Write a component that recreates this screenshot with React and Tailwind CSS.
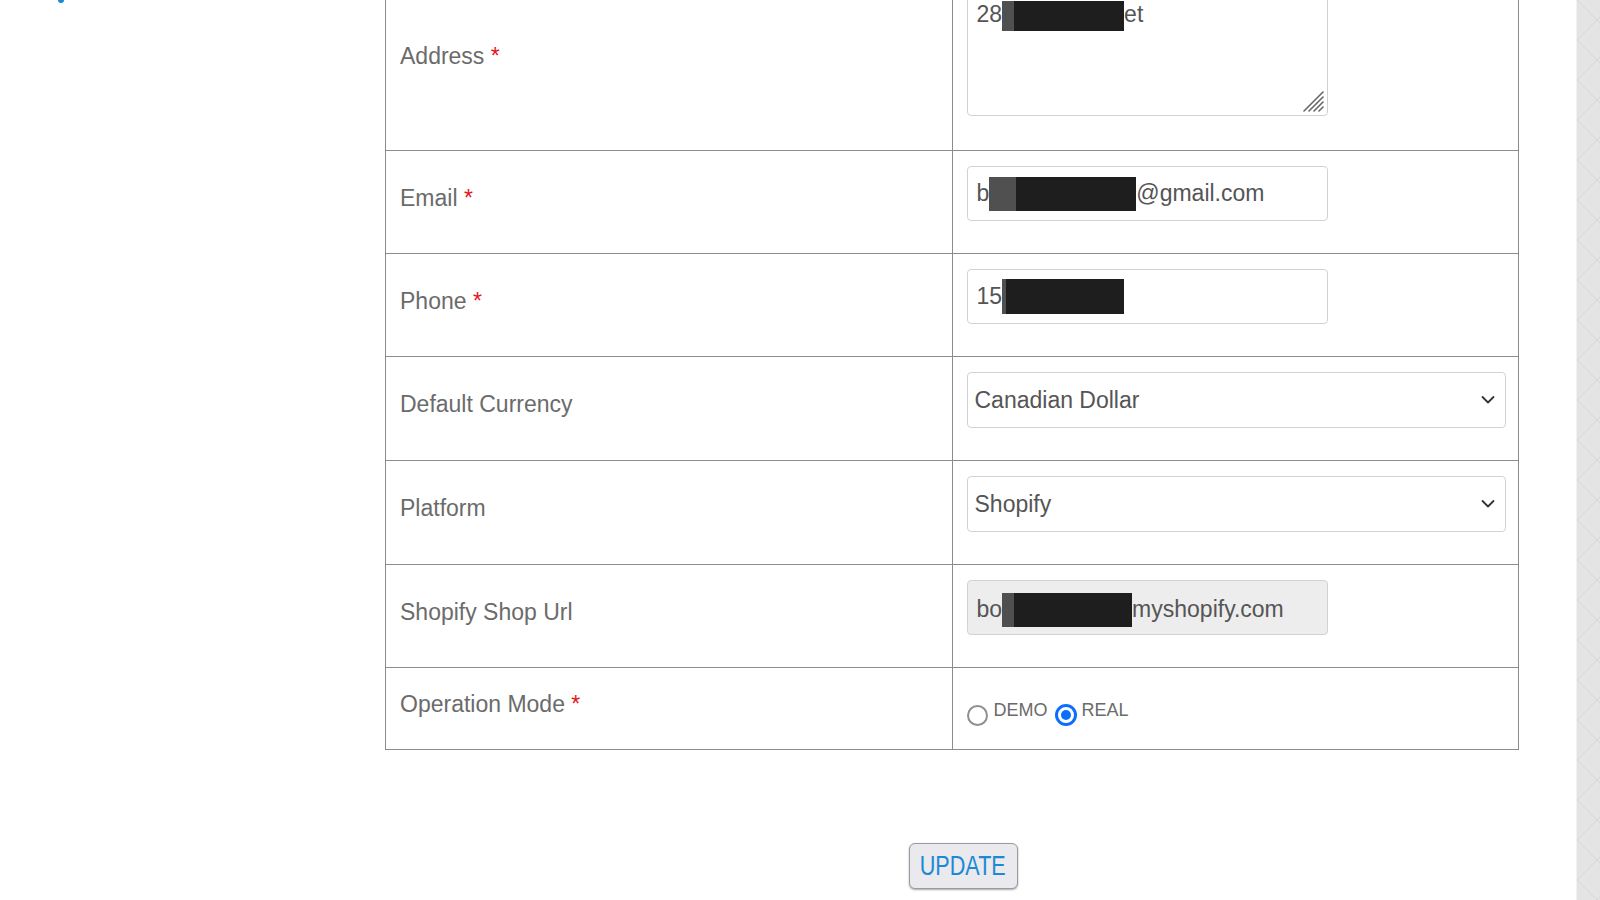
const Req = () => <span className="text-[#e8141b]"> *</span>

const Redact = ({ w, h = 34, lead = 0 }) => (
  <span className="inline-flex items-stretch align-middle" style={{ height: h }}>
    {lead > 0 && <span className="bg-[#3d3d3d]/90" style={{ width: lead }} />}
    <span className="bg-[#1e1e1e]" style={{ width: w }} />
  </span>
)

const Chevron = () => (
  <svg className="absolute right-[10px] top-1/2 -translate-y-1/2" width="14" height="9" viewBox="0 0 14 9">
    <polyline points="1.5,1.5 7,7 12.5,1.5" fill="none" stroke="#333" strokeWidth="1.8" strokeLinecap="round" strokeLinejoin="round" />
  </svg>
)

const ResizeHandle = () => (
  <svg className="absolute bottom-[2px] right-[2px]" width="24" height="24" viewBox="0 0 24 24">
    <g stroke="#666" strokeWidth="1.6" strokeLinecap="round">
      <line x1="22" y1="3" x2="3" y2="22" />
      <line x1="22" y1="8" x2="8" y2="22" />
      <line x1="22" y1="13" x2="13" y2="22" />
      <line x1="22" y1="18" x2="18" y2="22" />
    </g>
  </svg>
)

const Row = ({ label, required, children, labelClass = 'pb-[8px]', valueClass = 'pt-[15px] pb-[16px]' }) => (
  <tr>
    <td className={`border border-[#8c8c8c] px-[14px] align-middle text-[23px] text-[#6b6b6b] ${labelClass}`}>
      {label}
      {required && <Req />}
    </td>
    <td className={`border border-[#8c8c8c] px-[14px] align-top ${valueClass}`}>{children}</td>
  </tr>
)

const fieldBox = 'flex items-center w-[361px] h-[55px] rounded-[4px] border border-[#d2d2d2] px-[9px] text-[23px] text-[#555] mb-[16px] whitespace-nowrap'
const selectBox = 'relative flex items-center w-[539px] h-[56px] rounded-[4px] border border-[#d2d2d2] pl-[7px] text-[23px] text-[#555] mb-[16px] bg-white'

export default function App() {
  return (
    <div className="flex h-[900px] overflow-hidden bg-white font-['Liberation_Sans',Arial,sans-serif]">
      <div className="flex flex-1">
        <aside className="w-[385px] shrink-0">
          <div className="ml-[58px] h-[3px] w-[6px] rounded-b-sm bg-[#1a8ad4]" />
        </aside>

        <main className="w-[1134px] shrink-0 -mt-[36px]">
          <table className="w-[1134px] table-fixed border-collapse">
            <colgroup>
              <col className="w-1/2" />
              <col className="w-1/2" />
            </colgroup>
            <tbody>
              <Row label="Address" required labelClass="pb-[2px]">
                <div className="relative mb-[18px] h-[136px] w-[361px] rounded-[4px] border border-[#d2d2d2] px-[9px] pt-[20px] text-[23px] leading-[27px] text-[#555]">
                  <span className="whitespace-nowrap">
                    28<Redact w={110} h={30} lead={12} />et
                  </span>
                  <ResizeHandle />
                </div>
              </Row>

              <Row label="Email" required>
                <div className={fieldBox}>
                  b<Redact w={120} lead={27} />@gmail.com
                </div>
              </Row>

              <Row label="Phone" required>
                <div className={fieldBox}>
                  15<Redact w={118} h={35} lead={4} />
                </div>
              </Row>

              <Row label="Default Currency">
                <div className={selectBox}>
                  Canadian Dollar
                  <Chevron />
                </div>
              </Row>

              <Row label="Platform">
                <div className={selectBox}>
                  Shopify
                  <Chevron />
                </div>
              </Row>

              <Row label="Shopify Shop Url">
                <div className={`${fieldBox} bg-[#ededed] pt-[4px]`}>
                  bo<Redact w={118} lead={12} />myshopify.com
                </div>
              </Row>

              <Row label="Operation Mode" required valueClass="pt-[31px] pb-[23px]">
                <div className="flex items-start text-[18px] leading-[22px] text-[#6b6b6b]">
                  <span className="mt-[6px] h-[21px] w-[21px] shrink-0 rounded-full border-2 border-[#8e8e93] bg-white" />
                  <span className="ml-[6px]">DEMO</span>
                  <span className="ml-[7px] mt-[5px] flex h-[22px] w-[22px] shrink-0 items-center justify-center rounded-full border-[3px] border-[#0d6efd] bg-white">
                    <span className="h-[10px] w-[10px] rounded-full bg-[#0d6efd]" />
                  </span>
                  <span className="ml-[5px]">REAL</span>
                </div>
              </Row>
            </tbody>
          </table>

          <div className="mt-[93px] flex justify-center pl-[22px]">
            <button className="flex h-[46px] w-[109px] items-center justify-center rounded-[6px] border border-[#9a9aa0] bg-[#e9e9ee] text-[#1a8ad4] shadow-[0_1px_2px_rgba(0,0,0,0.35)]">
              <span className="inline-block scale-x-80 text-[27px] leading-none">UPDATE</span>
            </button>
          </div>
        </main>
      </div>

      <div className="h-full w-[24px] shrink-0 border-l border-[#f2f2f2] bg-[#e4e4e4]">
        <svg width="24" height="900">
          <defs>
            <pattern id="hatch" width="40" height="40" patternUnits="userSpaceOnUse">
              <line x1="0" y1="0" x2="40" y2="40" stroke="#d6d6d6" strokeWidth="1" />
              <line x1="40" y1="0" x2="0" y2="40" stroke="#d6d6d6" strokeWidth="1" />
            </pattern>
          </defs>
          <rect width="24" height="900" fill="url(#hatch)" />
        </svg>
      </div>
    </div>
  )
}
